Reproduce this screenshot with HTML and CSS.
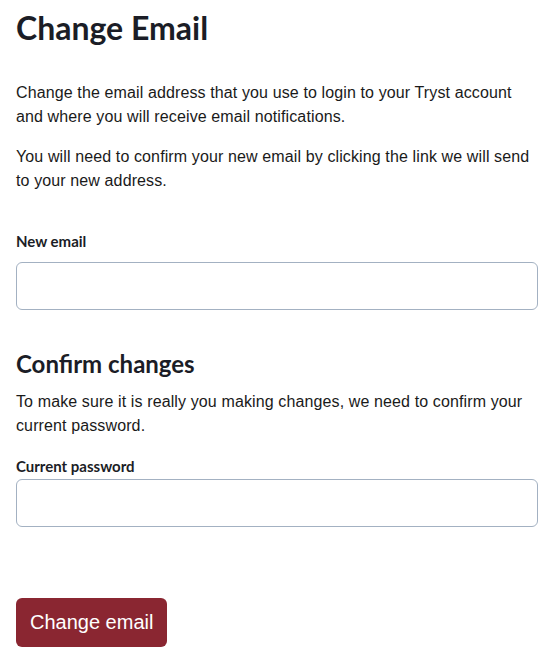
FILE: index.html
```html
<!DOCTYPE html>
<html lang="en">
<head>
    <meta charset="UTF-8">
    <meta name="viewport" content="width=device-width, initial-scale=1.0">
    <title>Change Email</title>
    <link rel="stylesheet" href="styles.css">
</head>
<body>
    <!-- Main Content -->
    <div class="container">
        <h1>Change Email</h1>
        <p>Change the email address that you use to login to your Tryst account and where you will receive email notifications.</p>
        <p>You will need to confirm your new email by clicking the link we will send to your new address.</p>

        <form class="email-form">
            <div class="field">
                <label for="newEmail">New email</label>
                <input type="email" id="newEmail">
            </div>

            <h2>Confirm changes</h2>
            <p>To make sure it is really you making changes, we need to confirm your current password.</p>

            <div class="field">
                <label for="password">Current password</label>
                <input type="password" id="password">
            </div>

            <button type="submit">Change email</button>
        </form>
    </div>
</body>
</html>
```

FILE: styles.css
```css
body {
    font-family: "Liberation Sans", Arial, sans-serif;
    margin: 0;
    padding: 0;
    background-color: #ffffff;
    color: #1a1a1a;
}
.container {
    padding: 8px 17px 0 16px;
}
h1 {
    font-family: Lato, "Open Sans", sans-serif;
    font-size: 32px;
    line-height: 40px;
    font-weight: 700;
    color: #1b1d26;
    margin: 0 0 33px;
}
h2 {
    font-family: Lato, "Open Sans", sans-serif;
    font-size: 24px;
    line-height: 32px;
    font-weight: 700;
    color: #1b1d26;
    margin: 38px 0 10px;
}
p {
    font-size: 16px;
    line-height: 24px;
    letter-spacing: 0.12px;
    margin: 0 0 16px;
}
.email-form {
    margin-top: 36px;
}
.field label {
    display: block;
    font-family: Lato, "Open Sans", sans-serif;
    font-size: 15px;
    font-weight: 700;
    line-height: 24px;
    color: #1b1d26;
    margin-bottom: 9px;
}
.field input {
    display: block;
    box-sizing: border-box;
    width: 100%;
    height: 48px;
    padding: 8px 12px;
    font-size: 16px;
    border: 1px solid #a3b1c2;
    border-radius: 6px;
    outline: none;
}
h2 + p + .field label {
    margin-bottom: 1px;
}
button {
    display: block;
    margin-top: 71px;
    padding: 0 14px;
    height: 49px;
    font-family: "Liberation Sans", Arial, sans-serif;
    font-size: 20px;
    color: #ffffff;
    background-color: #8a2631;
    border: none;
    border-radius: 6px;
    cursor: pointer;
}
button:hover {
    background-color: #741e28;
}
```
